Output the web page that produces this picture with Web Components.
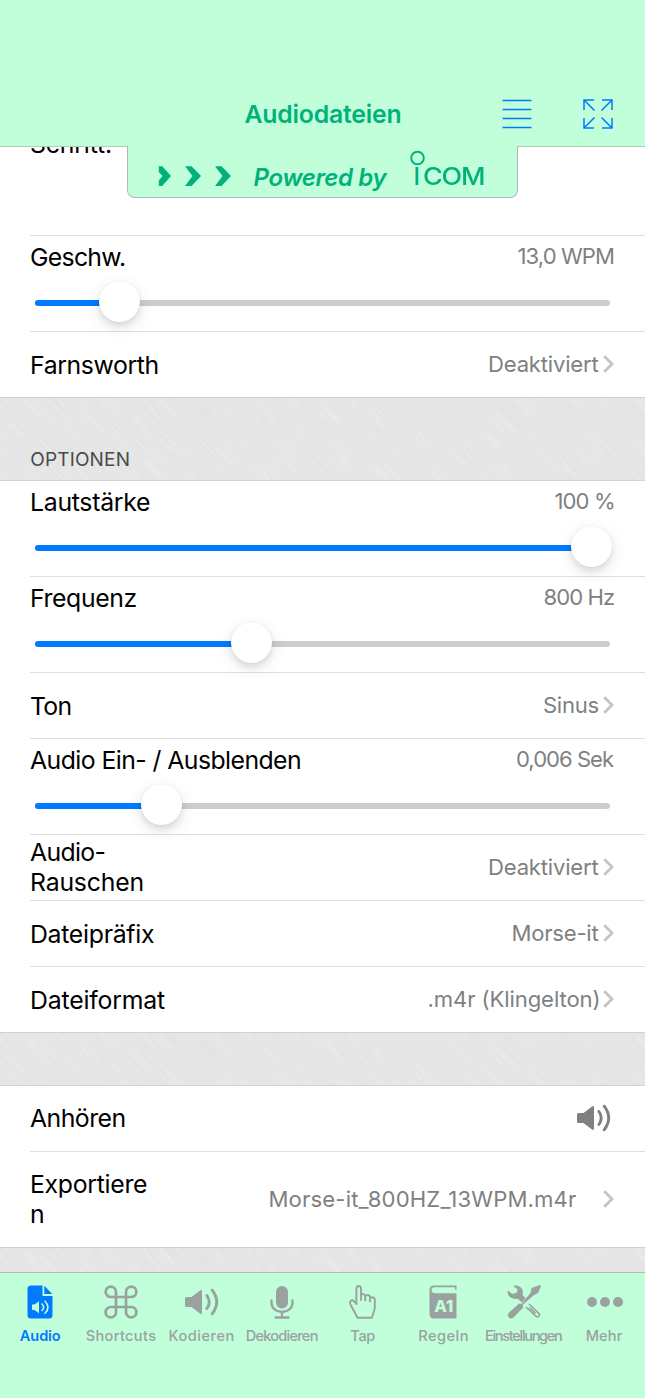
<!DOCTYPE html>
<html lang="de">
<head>
<meta charset="utf-8">
<title>Audiodateien</title>
<style>
html,body{margin:0;padding:0;background:#fff}
body{font-family:Inter,"Liberation Sans",sans-serif;color:#000}
</style>
</head>
<body>
<morse-app></morse-app>
<script>
const define = (name, html, setup) => {
  const t = document.createElement('template');
  t.innerHTML = html;
  customElements.define(name, class extends HTMLElement {
    connectedCallback() {
      if (this.shadowRoot) return;
      this.attachShadow({mode: 'open'}).append(t.content.cloneNode(true));
      if (setup) setup(this, this.shadowRoot);
    }
  });
};

/* A line of text tracked so that its visible glyphs span the given width;
   with "origin" the left side bearing of the first glyph is kept */
const pen = document.createElement('canvas').getContext('2d');
define('fit-text', `<style>:host{display:block;white-space:pre;flex:none}span{display:inline-block}</style><span><slot></slot></span>`,
(el, root) => {
  const s = root.querySelector('span'), cs = getComputedStyle(el), txt = el.textContent;
  pen.font = `${cs.fontStyle} ${cs.fontWeight} ${cs.fontSize} ${cs.fontFamily}`;
  const m = pen.measureText(txt), l = -m.actualBoundingBoxLeft, r = m.width - m.actualBoundingBoxRight;
  const ls = txt.length > 1 ? (parseFloat(el.getAttribute('w')) - (m.width - l - r)) / (txt.length - 1) : 0;
  s.style.letterSpacing = ls + 'px';
  if (!el.hasAttribute('origin')) s.style.marginLeft = -l + 'px';
  s.style.marginRight = -(r + ls) + 'px';
});

define('chevron-right', `<style>:host{display:block;width:11px;height:18px;flex:none}svg{display:block}</style>
<svg width="11" height="18" viewBox="0 0 11 18" fill="none" stroke="#c4c4c6" stroke-width="2.8"><path d="M1.3 1.2 9 9 1.3 16.8"/></svg>`);

define('speaker-icon', `<style>:host{display:block;width:34px;height:28px;flex:none}svg{display:block}</style>
<svg width="34" height="28" viewBox="0 0 34 28"><path fill="currentColor" d="M1.5 9h5L15 2.4Q17 1.4 17 3.5v21Q17 26.600 15 25.600L6.500 19h-5Q0 19 0 17.500v-7Q0 9 1.500 9z"/><path fill="none" stroke="currentColor" stroke-width="2.900" stroke-linecap="round" d="M21.900 7.500Q26.600 14 21.900 20.500M27.200 2.200Q36.200 14 27.200 25.800"/></svg>`);

/* Brushed grey strip between groups */
define('brushed-gap', `<style>
:host{display:block;position:relative;overflow:hidden;background:#e4e4e4;box-sizing:border-box;border-bottom:1px solid #d3d3d5}
.tex{position:absolute;left:-100px;top:-420px;width:850px;height:900px;transform:rotate(48deg);opacity:.22}
.in{position:relative;height:100%}
</style><svg class="tex" aria-hidden="true"><filter id="f" x="0" y="0" width="100%" height="100%"><feTurbulence type="fractalNoise" baseFrequency=".025 .42" numOctaves="2" seed="4"/><feColorMatrix values="0 0 0 0 1  0 0 0 0 1  0 0 0 0 1  1.800 0 0 0 -.6"/></filter><rect width="850" height="900" filter="url(#f)"/></svg><div class="in"><slot></slot></div>`);

define('setting-row', `<style>
:host{display:flex;position:relative;box-sizing:border-box;height:66px;padding:0 31px 1px 30px;align-items:center;justify-content:space-between;background:#fff;font-size:24.800px;line-height:30px}
:host::after{content:"";position:absolute;left:30px;right:0;bottom:0;height:1px;background:#dedee0}
:host([last])::after{left:0;background:#d0d0d2}
.v{display:flex;align-items:center;color:#808080;font-size:22.100px;margin-top:-1px}
.v ::slotted(chevron-right){margin-left:4.500px}
:host([raised]) .l{margin-top:-2px}
</style><div class="l"><slot></slot></div><div class="v"><slot name="value"></slot></div>`);

define('slider-row', `<style>
:host{display:block;position:relative;box-sizing:border-box;height:96px;background:#fff}
:host::after{content:"";position:absolute;left:30px;right:0;bottom:0;height:1px;background:#dedee0}
.top{display:flex;justify-content:space-between;padding:0 31px 0 30px;height:45px;font-size:24.800px;line-height:42px}
.val{font-size:22.100px;line-height:40px;color:#808080}
.ctl{display:flex;align-items:center;margin:0 35px;height:44px;position:relative}
.track{flex:1;height:6px;border-radius:3px;background:#cdcdcf;overflow:hidden}
.fill{height:100%;background:#007aff;width:var(--x)}
.thumb{position:absolute;z-index:2;left:var(--x);top:0;width:41px;height:41px;margin-left:-20.500px;border-radius:50%;background:#fff;box-shadow:0 0 1px rgba(0,0,0,.1),0 4px 7px rgba(0,0,0,.1),0 5px 18px rgba(0,0,0,.09)}
</style><div class="top"><slot></slot><div class="val"><slot name="value"></slot></div></div>
<div class="ctl"><div class="track"><div class="fill"></div></div><div class="thumb"></div></div>`,
(el) => el.style.setProperty('--x', el.getAttribute('at') + 'px'));

define('nav-header', `<style>
:host{display:block;position:relative;z-index:5;height:147px;background:#c0ffda;box-sizing:border-box;border-bottom:1px solid #b3cabd}
.bar{display:flex;align-items:center;height:146px;padding-top:82px;box-sizing:border-box;color:#00b27a}
fit-text{font-size:24.800px;font-weight:600;line-height:64px;margin-left:244.500px}
.menu{margin-left:101px;flex:none}.full{margin-left:51px;flex:none}
.tab{position:absolute;left:127px;top:146px;width:391px;height:52px;box-sizing:border-box;border:1px solid #a9bdb2;border-top:0;border-radius:0 0 8px 8px;background:#c0ffda;color:#00b27a;display:flex}
.arr{display:block;margin:20px 0 0 30px;flex:none}
.pow{font-size:24px;font-weight:600;font-style:italic;line-height:30px;margin:17px 0 0 21.500px}
.logo{position:relative;margin:16px 0 0 27px;display:flex;gap:5px}
.logo fit-text{font-size:24px;font-weight:500;line-height:30px;margin:0}
.logo .wide{transform:scaleX(1.12);transform-origin:0 0}
.ring{position:absolute;left:-5px;top:-12px}
</style><div class="bar"><fit-text w="156">Audiodateien</fit-text>
<svg class="menu" width="30" height="30" viewBox="0 0 30 30" stroke="#007aff" stroke-width="1.400"><path d="M.5 1.500h29M.5 10.500h29M.5 19.500h29M.5 28.500h29"/></svg>
<svg class="full" width="30" height="30" viewBox="0 0 30 30" fill="none" stroke="#007aff" stroke-width="1.500"><path d="M1 11V1h10M1 1l10.500 10.500M19 1h10v10M29 1 18.500 11.500M1 19v10h10M1 29l10.500-10.500M19 29h10V19M29 29 18.500 18.500"/></svg></div>
<div class="tab"><svg class="arr" width="74" height="21" viewBox="0 0 74 21" fill="#00b27a"><path d="M.8.3h3.400L13 10 4.200 20H.8v-5.500L4.500 10 .8 6zM27 .3h6.500L43 10l-9.500 10H27l7.500-10zM57 .3h6.500L73 10l-9.500 10H57l7.500-10z"/></svg>
<fit-text class="pow" w="134">Powered by</fit-text>
<div class="logo"><svg class="ring" width="15" height="16" viewBox="0 0 15 16"><circle cx="7.500" cy="8" r="6.300" fill="none" stroke="#00b27a" stroke-width="1.900"/></svg><fit-text w="3">I</fit-text><fit-text class="wide" w="53">COM</fit-text></div></div>`);

define('tab-item', `<style>
:host{flex:1 1 0;min-width:0;display:flex;flex-direction:column;align-items:center;color:#9aa2a0;font-size:14.600px;font-weight:500;line-height:20px}
:host([active]){color:#007aff;font-weight:600}
.i{height:35px;display:flex;align-items:center;justify-content:center;margin:11px 0 7px}
</style><div class="i"><slot name="icon"></slot></div><slot></slot>`);

define('tab-bar', `<style>
:host{display:flex;box-sizing:border-box;height:126px;background:#c0ffda;border-top:1px solid #aebfb5}
svg{display:block}
</style>
<tab-item active><svg slot="icon" width="26" height="34" viewBox="0 0 26 34"><path fill="#007aff" d="M4 .5h11.500v10.500h10V30q0 3.500-3.500 3.500H4Q.5 33.500.5 30V4Q.5.5 4 .5z"/><path fill="#007aff" d="M17.300.8 25.300 9h-8z"/><path fill="#c0ffda" d="M5 19.500h2.500l4.500-3.300v12L7.500 25H5z"/><path fill="none" stroke="#c0ffda" stroke-width="1.600" stroke-linecap="round" d="M15 19q3.300 3.300 0 6.500M18 16.200q6 6 0 12"/></svg><fit-text w="41">Audio</fit-text></tab-item>
<tab-item><svg slot="icon" width="34" height="34" viewBox="0 0 34 34" fill="none" stroke="currentColor" stroke-width="2.700"><path d="M12 12H6.800A5.200 5.200 0 1 1 12 6.800v20.400A5.200 5.200 0 1 1 6.800 22h20.400A5.200 5.200 0 1 1 22 27.200V6.800A5.200 5.200 0 1 1 27.200 12z"/></svg><fit-text w="70.500">Shortcuts</fit-text></tab-item>
<tab-item><speaker-icon slot="icon"></speaker-icon><fit-text w="64">Kodieren</fit-text></tab-item>
<tab-item><svg slot="icon" width="24" height="34" viewBox="0 0 24 34"><rect x="6" y="1" width="12" height="22.500" rx="6" fill="currentColor"/><path fill="none" stroke="currentColor" stroke-width="2.300" stroke-linecap="round" d="M1.500 15.500v2.500a10.500 9 0 0 0 21 0v-2.500M12 27v5M5.500 32.500h13"/></svg><fit-text w="71">Dekodieren</fit-text></tab-item>
<tab-item><svg slot="icon" width="27" height="34" viewBox="0 0 27 34" fill="none" stroke="currentColor" stroke-width="1.900" stroke-linejoin="round" stroke-linecap="round"><path d="M8.500 32.800h14.500l2.800-9.300V14.500q-.6-2.300-2.500-2.300T21 14v2.500V12.200q-.5-2.200-2.400-2.200T16.200 12v3.500V11q-.5-2-2.300-2T12 10.800V15 3.500Q11.800 1 9.700 1T7.400 3.500V19L4.800 16Q3 14.400 1.600 15.800T2 20.500z"/></svg><fit-text w="25">Tap</fit-text></tab-item>
<tab-item><svg slot="icon" width="28" height="34" viewBox="0 0 28 34"><path fill="currentColor" d="M5 .5h22.500v4.300H26V2.200H5.500Q2.500 2.200 2.500 5t3 3.200h22V33.500H5Q.5 33.500.5 29V5Q.5.5 5 .5z"/><text x="14.800" y="26.500" text-anchor="middle" font-family="Inter,sans-serif" font-size="16.500" font-weight="800" fill="#c0ffda">A1</text></svg><fit-text w="48.500">Regeln</fit-text></tab-item>
<tab-item><svg slot="icon" width="34" height="34" viewBox="0 0 34 34"><path fill="currentColor" d="M6 .8q7-1.300 9.500 4 .8 2.800 0 5.200l3.200 3.200-4 4-3.700-3.300Q4.500 14.500 1.500 10.500.3 8.500.8 5.500L5.500 9l4.200-1.200.8-3.500z"/><path fill="none" stroke="currentColor" stroke-width="1.600" d="m22 19 9.800 9.300q1.200 1.500 0 2.900t-3 0L19 22M22.500 22.500l6 5.800"/><path fill="currentColor" d="M32.800 0 34 1.200l-3 6.800-4.500 2.500L15.500 20l1 2.200L6.500 32.500q-2.300 2-4.600 0t0-4.700L12 18.500l2.300.5L23.500 8 24.500 3z"/></svg><fit-text w="76">Einstellungen</fit-text></tab-item>
<tab-item><svg slot="icon" width="36" height="34" viewBox="0 0 36 34" fill="currentColor"><circle cx="5" cy="17" r="5"/><circle cx="18" cy="17" r="5"/><circle cx="31" cy="17" r="5"/></svg><fit-text w="36">Mehr</fit-text></tab-item>`);

define('morse-app', `<style>
:host{display:flex;flex-direction:column;width:645px;height:1398px;overflow:hidden;background:#fff}
nav-header,main>*,tab-bar{flex:none}
main{height:1125px;display:flex;flex-direction:column;overflow:hidden}
.first{height:89px;align-items:flex-start}
.first fit-text{margin-top:-18px}
.head{height:83px}
.head fit-text{font-size:19px;line-height:24px;color:#4b4b4b;margin-left:31.200px;padding-top:50px}
.tall{height:96px}
speaker-icon{color:#808080;margin-right:3px}
.tall chevron-right{margin-left:27px}
</style>
<nav-header></nav-header>
<main>
<setting-row class="first"><fit-text origin w="80">Schritt:</fit-text></setting-row>
<slider-row at="84.500"><fit-text origin w="94">Geschw.</fit-text><fit-text slot="value" w="95.500">13,0 WPM</fit-text></slider-row>
<setting-row last><fit-text origin w="125.500">Farnsworth</fit-text><fit-text slot="value" w="109.500">Deaktiviert</fit-text><chevron-right slot="value"></chevron-right></setting-row>
<brushed-gap class="head"><fit-text w="97.500">OPTIONEN</fit-text></brushed-gap>
<slider-row at="556.500"><fit-text origin w="118">Lautstärke</fit-text><fit-text slot="value" w="58.500">100 %</fit-text></slider-row>
<slider-row at="216.500"><fit-text origin w="104.500">Frequenz</fit-text><fit-text slot="value" w="69.500">800 Hz</fit-text></slider-row>
<setting-row><fit-text origin w="39.500">Ton</fit-text><fit-text slot="value" w="54.500">Sinus</fit-text><chevron-right slot="value"></chevron-right></setting-row>
<slider-row at="126.500"><fit-text origin w="270">Audio Ein- / Ausblenden</fit-text><fit-text slot="value" w="97">0,006 Sek</fit-text></slider-row>
<setting-row raised><fit-text origin w="74.500">Audio-</fit-text><fit-text origin w="110.500">Rauschen</fit-text><fit-text slot="value" w="109.500">Deaktiviert</fit-text><chevron-right slot="value"></chevron-right></setting-row>
<setting-row><fit-text origin w="122">Dateipräfix</fit-text><fit-text slot="value" w="86">Morse-it</fit-text><chevron-right slot="value"></chevron-right></setting-row>
<setting-row last><fit-text origin w="133">Dateiformat</fit-text><fit-text slot="value" w="170">.m4r (Klingelton)</fit-text><chevron-right slot="value"></chevron-right></setting-row>
<brushed-gap style="height:53px"></brushed-gap>
<setting-row raised><fit-text origin w="94.500">Anhören</fit-text><speaker-icon slot="value"></speaker-icon></setting-row>
<setting-row raised last class="tall"><fit-text origin w="115">Exportiere</fit-text><fit-text origin>n</fit-text><fit-text slot="value" w="306.500">Morse-it_800HZ_13WPM.m4r</fit-text><chevron-right slot="value"></chevron-right></setting-row>
<brushed-gap style="height:25px"></brushed-gap>
</main>
<tab-bar></tab-bar>`);
</script>
</body>
</html>
